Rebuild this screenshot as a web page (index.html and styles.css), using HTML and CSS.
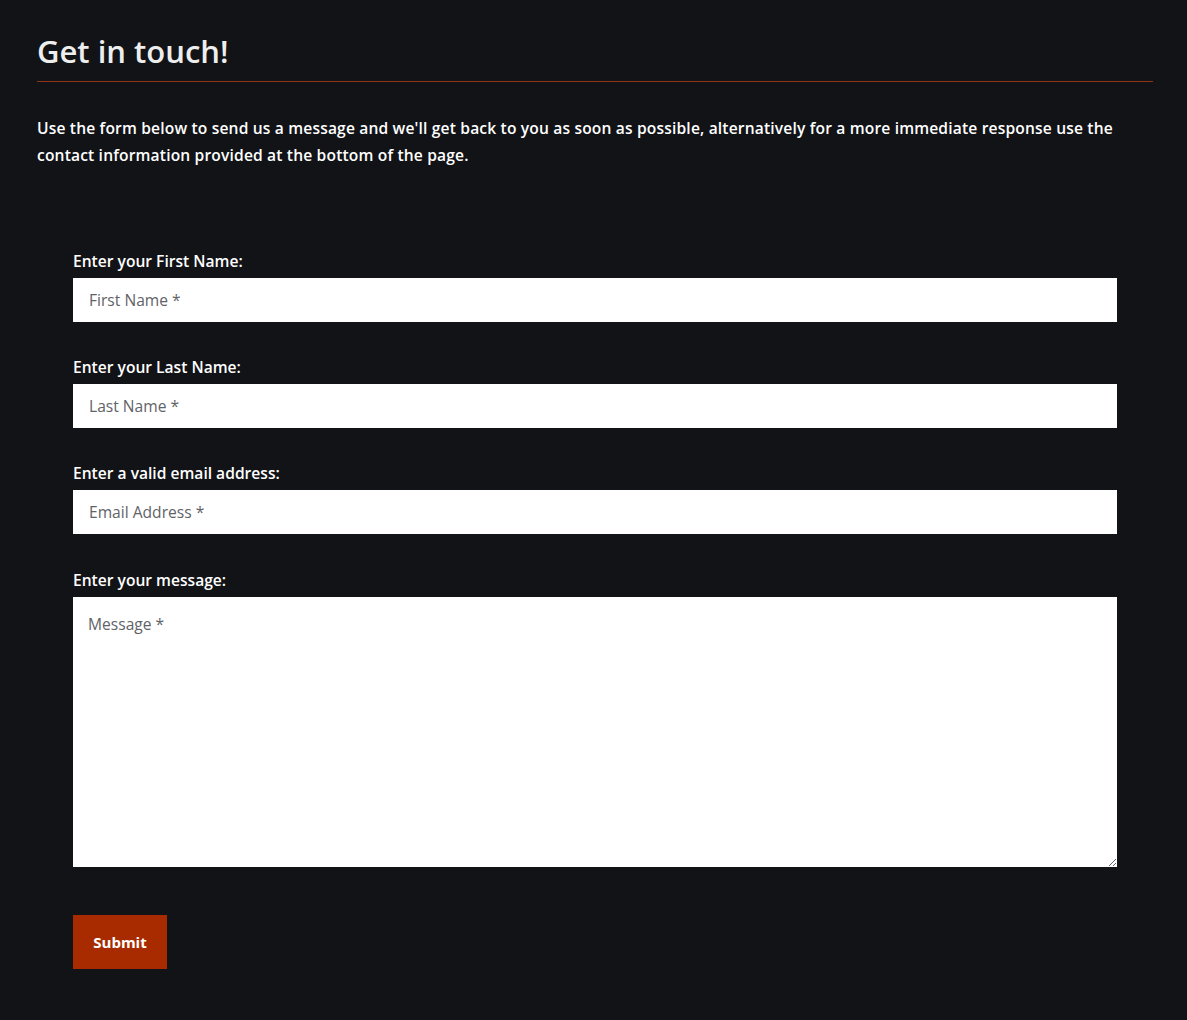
FILE: index.html
```
<!DOCTYPE html>
<html lang="en">
<head>
<meta charset="utf-8">
<title>Get in touch!</title>
<link rel="stylesheet" href="styles.css">
</head>
<body>
<main class="page">
  <h1 class="title">Get in touch!</h1>
  <p class="intro">Use the form below to send us a message and we'll get back to you as soon as possible, alternatively for a more immediate response use the contact information provided at the bottom of the page.</p>
  <form class="form">
    <div class="group">
      <label class="label" for="fn">Enter your First Name:</label>
      <input class="field" id="fn" type="text" placeholder="First Name *">
    </div>
    <div class="group">
      <label class="label" for="ln">Enter your Last Name:</label>
      <input class="field" id="ln" type="text" placeholder="Last Name *">
    </div>
    <div class="group">
      <label class="label" for="em">Enter a valid email address:</label>
      <input class="field" id="em" type="email" placeholder="Email Address *">
    </div>
    <div class="group group-last">
      <label class="label" for="msg">Enter your message:</label>
      <textarea class="field area" id="msg" placeholder="Message *"></textarea>
    </div>
    <button class="submit" type="button">Submit</button>
  </form>
</main>
</body>
</html>
```
FILE: styles.css
```
html, body {
  margin: 0;
  padding: 0;
  background: #121317;
}
body {
  font-family: "Open Sans", "Noto Sans", "Liberation Sans", sans-serif;
  color: #f4f4f4;
}
.page {
  width: 1116px;
  padding: 29px 0 51px 37px;
}
.title {
  margin: 0;
  font-size: 31px;
  line-height: 44px;
  font-weight: 600;
  color: #eeeeee;
  padding-bottom: 8px;
  border-bottom: 1px solid #8f3414;
}
.intro {
  margin: 33px 0 0;
  font-size: 15.6px;
  line-height: 27px;
  font-weight: 600;
  letter-spacing: 0.16px;
  color: #ffffff;
}
.form {
  margin-top: 82px;
  padding: 0 36px;
  display: flex;
  flex-direction: column;
}
.group {
  display: flex;
  flex-direction: column;
  margin-bottom: 35px;
}
.label {
  font-size: 15.6px;
  line-height: 20px;
  font-weight: 600;
  color: #ffffff;
  margin-bottom: 7px;
}
.field {
  box-sizing: border-box;
  height: 44px;
  width: 100%;
  border: none;
  outline: none;
  background: #ffffff;
  padding: 0 16px;
  font-family: "Open Sans", "Noto Sans", "Liberation Sans", sans-serif;
  font-size: 15.6px;
  color: #333;
  margin: 0;
}
.field::placeholder {
  color: #5f6368;
  opacity: 1;
}
.area {
  height: 270px;
  padding: 16px 15px;
  resize: vertical;
  display: block;
}
.group-last {
  margin-top: 1px;
  margin-bottom: 48px;
}
.submit {
  align-self: flex-start;
  width: 94px;
  height: 54px;
  border: none;
  background: #a82b00;
  color: #ffffff;
  font-family: "Open Sans", "Noto Sans", "Liberation Sans", sans-serif;
  font-size: 15px;
  font-weight: 700;
  padding: 0;
  cursor: pointer;
}
```
